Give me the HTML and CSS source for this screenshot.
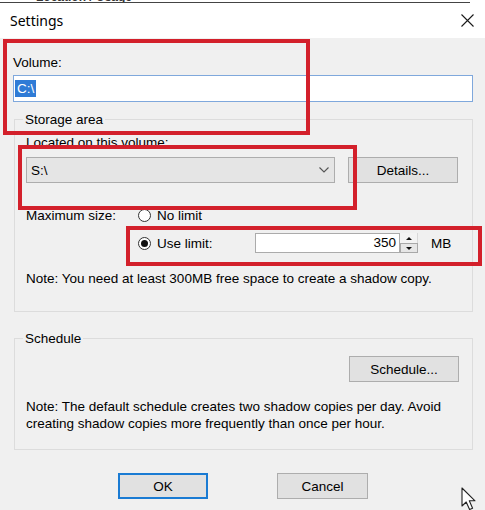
FILE: index.html
```html
<!DOCTYPE html>
<html>
<head>
<meta charset="utf-8">
<title>Settings</title>
<link rel="stylesheet" href="styles.css">
</head>
<body>
<div class="behind"><div class="behind-line"><span class="behind-text">Location / Usage</span></div></div>
<div class="dialog">
  <div class="titlebar">
    <span class="title">Settings</span>
    <svg class="close" width="13" height="13" viewBox="0 0 13 13"><path d="M0.5 0.5 L12.5 12.5 M12.5 0.5 L0.5 12.5" stroke="#1a1a1a" stroke-width="1.1" fill="none"/></svg>
  </div>
  <div class="content">
    <div class="label">Volume:</div>
    <div class="textbox vol"><span class="sel">C:\</span></div>

    <fieldset class="group storage">
      <legend>Storage area</legend>
      <div class="label">Located on this volume:</div>
      <div class="combo-row">
        <div class="combo"><span>S:\</span><svg class="chev" width="10" height="6" viewBox="0 0 10 6"><path d="M0.5 0.5 L5 5 L9.5 0.5" stroke="#555" stroke-width="1.1" fill="none"/></svg></div>
        <button class="btn details">Details...</button>
      </div>
      <div class="size-row">
        <span class="size-label">Maximum size:</span>
        <span class="radio"><span class="circle"></span>No limit</span>
      </div>
      <div class="size-row limit">
        <span class="size-label"></span>
        <span class="radio use"><span class="circle on"></span>Use limit:</span>
        <div class="num">350</div>
        <div class="spin"><span class="up"><i class="tri-up"></i></span><span class="down"><i class="tri-down"></i></span></div>
        <span class="unit">MB</span>
      </div>
      <p class="note">Note: You need at least 300MB free space to create a shadow copy.</p>
    </fieldset>

    <fieldset class="group schedule">
      <legend>Schedule</legend>
      <div class="sched-row"><button class="btn sched">Schedule...</button></div>
      <p class="note two">Note: The default schedule creates two shadow copies per day. Avoid<br>creating shadow copies more frequently than once per hour.</p>
    </fieldset>

    <div class="actions">
      <button class="btn ok">OK</button>
      <button class="btn cancel">Cancel</button>
    </div>
  </div>
</div>

<div class="mark m1"></div>
<div class="mark m2"></div>
<div class="mark m3"></div>

<svg class="cursor" width="17" height="24" viewBox="0 0 17 24"><path d="M1 1 L1 19 L5.2 15 L8.6 22.5 L11.6 21.2 L8.3 13.8 L14 13.8 Z" fill="#fff" stroke="#222" stroke-width="1.1" stroke-linejoin="round"/></svg>
</body>
</html>
```

FILE: styles.css
```css
* { box-sizing: border-box; }
html, body { margin: 0; padding: 0; }
body {
  width: 485px;
  height: 510px;
  overflow: hidden;
  position: relative;
  background: #f0f0f0;
  font-family: "Liberation Sans", Arial, sans-serif;
  font-size: 13.5px;
  line-height: 15px;
  color: #000;
}

.behind { height: 3px; background: #fff; }
.behind-line {
  width: 470px;
  height: 3px;
  border-bottom: 1px solid #444;
  display: flex;
  align-items: flex-end;
  overflow: hidden;
  padding-left: 36px;
}
.behind-text { line-height: 10px; font-size: 12px; color: #333; font-weight: bold; }

.titlebar {
  height: 35px;
  background: #fff;
  display: flex;
  align-items: center;
  justify-content: space-between;
  padding: 0 11px 0 10px;
}
.title { font-family: "Noto Sans", "Liberation Sans", sans-serif; font-size: 14px; line-height: 19px; color: #000; }
.close { display: block; }

.content { padding: 17px 12px 0 13px; }

.label { line-height: 15px; }

.textbox { background: #fff; }
.vol {
  margin-top: 5px;
  height: 27px;
  width: 460px;
  border: 1px solid #7fa8dc;
  display: flex;
  align-items: center;
  padding-left: 1px;
}
.sel {
  background: #2f7bd6;
  color: #fff;
  line-height: 17px;
  height: 17px;
  padding: 0 2px;
}

.group {
  margin: 10px 0 0 1px;
  width: 459px;
  min-width: 0;
  border: 1px solid #dcdcdc;
}
.group legend {
  padding: 0 2px;
  margin-left: -3px;
  line-height: 15px;
}
.storage { padding: 8px 14px 25px 11px; }
.schedule { margin-top: 19px; padding: 8px 13px 17px 11px; }

.combo-row { display: flex; margin-top: 7px; }
.combo {
  width: 309px;
  height: 26px;
  background: #e5e5e5;
  border: 1px solid #adadad;
  display: flex;
  align-items: center;
  justify-content: space-between;
  padding: 0 5px 0 4px;
}
.chev { display: block; }

.btn {
  font-family: inherit;
  font-size: 13.5px;
  line-height: 15px;
  color: #000;
  background: #e1e1e1;
  border: 1px solid #adadad;
  height: 26px;
  padding: 0;
  margin: 0;
}
.details { width: 110px; margin-left: 13px; }

.size-row { display: flex; align-items: center; margin-top: 25px; height: 15px; }
.size-row.limit { margin-top: 10px; height: 20px; }
.size-label { width: 112px; }
.radio { display: flex; align-items: center; }
.radio.use { width: 117px; }
.circle {
  width: 13px;
  height: 13px;
  border: 1px solid #333;
  border-radius: 50%;
  background: #fff;
  margin-right: 6px;
  display: flex;
  align-items: center;
  justify-content: center;
}
.circle.on::after {
  content: "";
  width: 7px;
  height: 7px;
  border-radius: 50%;
  background: #111;
}
.num {
  width: 145px;
  height: 20px;
  background: #fff;
  border: 1px solid #ababab;
  text-align: right;
  padding-right: 3px;
  line-height: 18px;
}
.spin { width: 18px; height: 20px; display: flex; flex-direction: column; }
.spin .up, .spin .down {
  height: 10px;
  display: flex;
  align-items: center;
  justify-content: center;
}
.spin .up { background: #f3f3f3; border-right: 1px solid #d8d8d8; }
.spin .down { background: #e6e6e6; border: 1px solid #a8a8a8; }
.tri-up { width: 0; height: 0; border-left: 3px solid transparent; border-right: 3px solid transparent; border-bottom: 3px solid #111; }
.tri-down { width: 0; height: 0; border-left: 3px solid transparent; border-right: 3px solid transparent; border-top: 3px solid #111; }
.unit { margin-left: 13px; }

.note { margin: 18px 0 0; line-height: 15px; }
.note.two { margin-top: 16px; line-height: 17px; }

.sched-row { display: flex; justify-content: flex-end; }
.sched { width: 110px; margin-top: 2px; }

.actions { display: flex; justify-content: center; gap: 69px; margin-top: 23px; }
.ok { width: 90px; border: 2px solid #1a7bd3; }
.cancel { width: 91px; }

.mark {
  position: absolute;
  border: 4px solid #d3202b;
  pointer-events: none;
}
.m1 { left: 3px; top: 39px; width: 307px; height: 96px; }
.m2 { left: 18px; top: 145px; width: 339px; height: 65px; }
.m3 { left: 126px; top: 226px; width: 356px; height: 40px; }

.cursor { position: absolute; left: 461px; top: 487px; }
```
